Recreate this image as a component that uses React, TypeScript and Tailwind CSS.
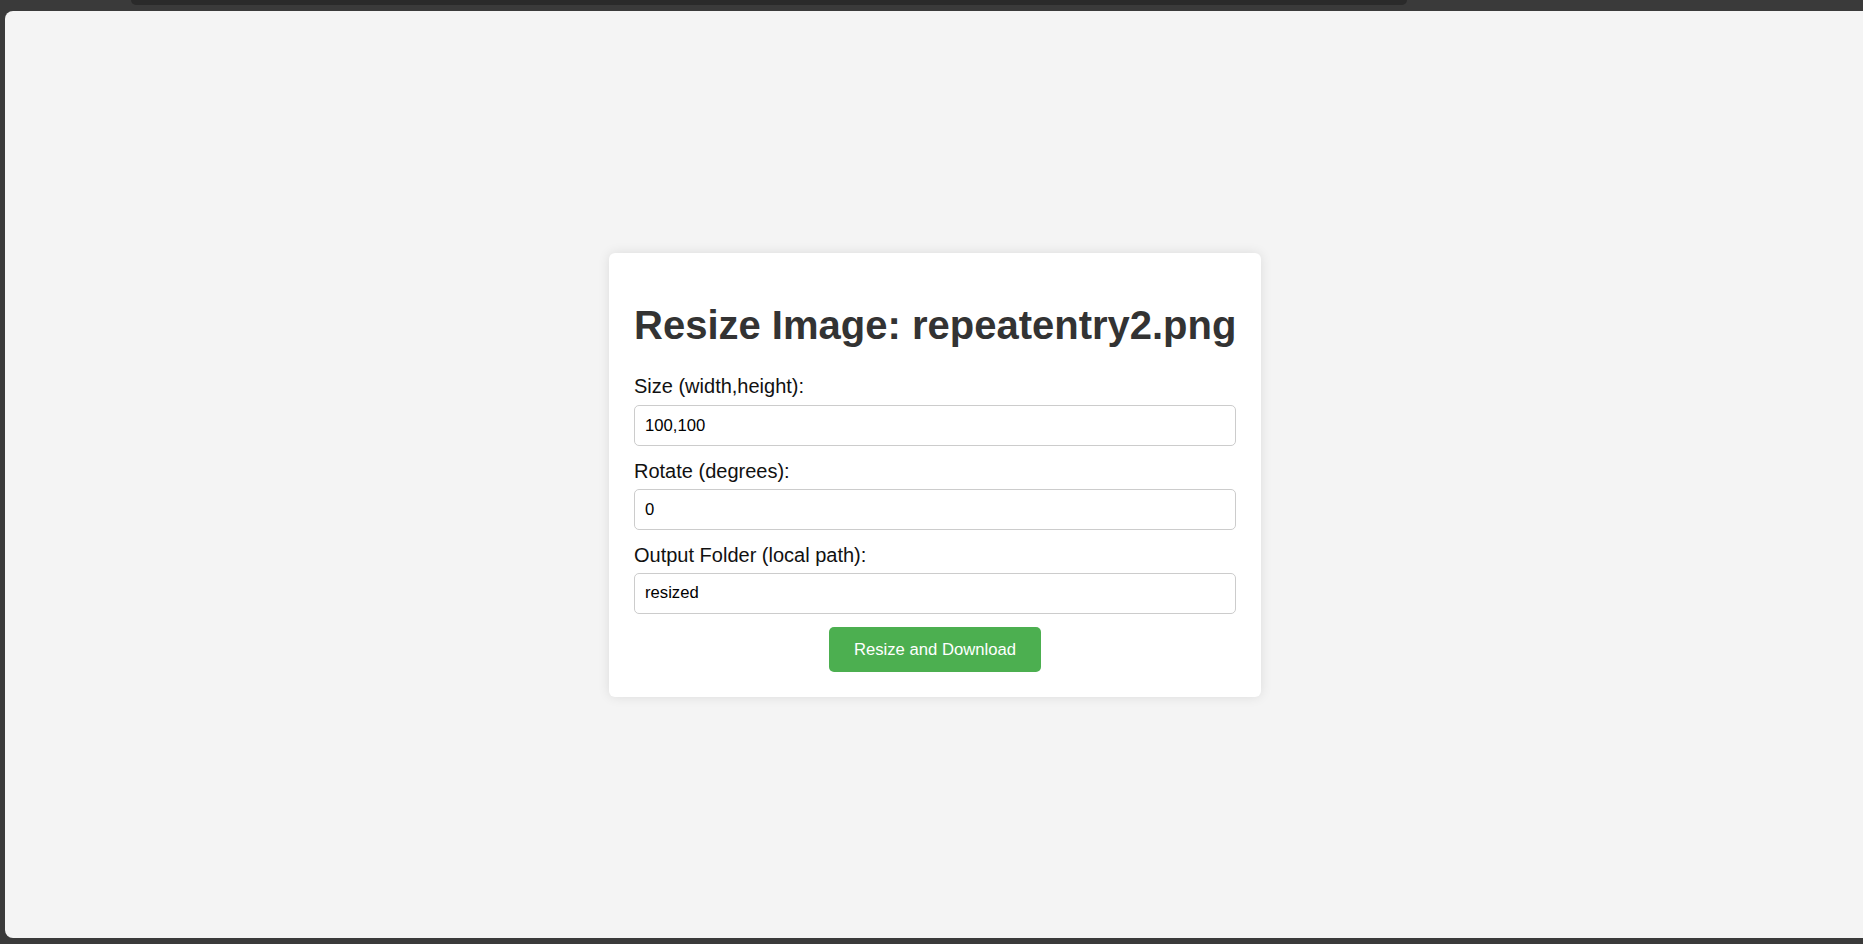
export default function App() {
  return (
    <div
      className="h-[944px] w-full bg-[#3a3a3a] flex flex-col overflow-hidden"
      style={{ fontFamily: '"Liberation Sans", Arial, sans-serif' }}
    >
      {/* browser chrome strip */}
      <div className="h-[11px] shrink-0 pl-[131px]">
        <div className="w-[1276px] h-[5px] bg-[#2a2a2a] rounded-b-[8px]"></div>
      </div>

      {/* page */}
      <div className="flex-1 ml-[5px] mb-[6px] pl-[2px] bg-[#f4f4f4] rounded-l-[8px] flex items-center justify-center">
        <div className="w-[652px] bg-white rounded-[6px] p-[25px] shadow-[0_0_12px_rgba(0,0,0,0.1)]">
          <h1 className="text-[40px] leading-[46px] font-bold text-[#333] mt-[24.5px] mb-[27px] whitespace-nowrap">
            Resize Image: repeatentry2.png
          </h1>

          <form onSubmit={(e) => e.preventDefault()}>
            <label className="block text-[20px] leading-[23px] text-[#111] mb-[7px]">
              Size (width,height):
            </label>
            <input
              type="text"
              defaultValue="100,100"
              className="block w-full h-[41px] px-[10px] mb-[13.5px] border border-[#ccc] rounded-[5px] text-[16.67px] text-black outline-none"
            />

            <label className="block text-[20px] leading-[23px] text-[#111] mb-[6.5px]">
              Rotate (degrees):
            </label>
            <input
              type="text"
              defaultValue="0"
              className="block w-full h-[41px] px-[10px] mb-[13.5px] border border-[#ccc] rounded-[5px] text-[16.67px] text-black outline-none"
            />

            <label className="block text-[20px] leading-[23px] text-[#111] mb-[6px]">
              Output Folder (local path):
            </label>
            <input
              type="text"
              defaultValue="resized"
              className="block w-full h-[41px] px-[10px] mb-[13px] border border-[#ccc] rounded-[5px] text-[16.67px] text-black outline-none"
            />

            <button
              type="submit"
              className="block mx-auto h-[45px] px-[25px] bg-[#4caf50] text-white text-[16.67px] rounded-[5px]"
            >
              Resize and Download
            </button>
          </form>
        </div>
      </div>
    </div>
  );
}
